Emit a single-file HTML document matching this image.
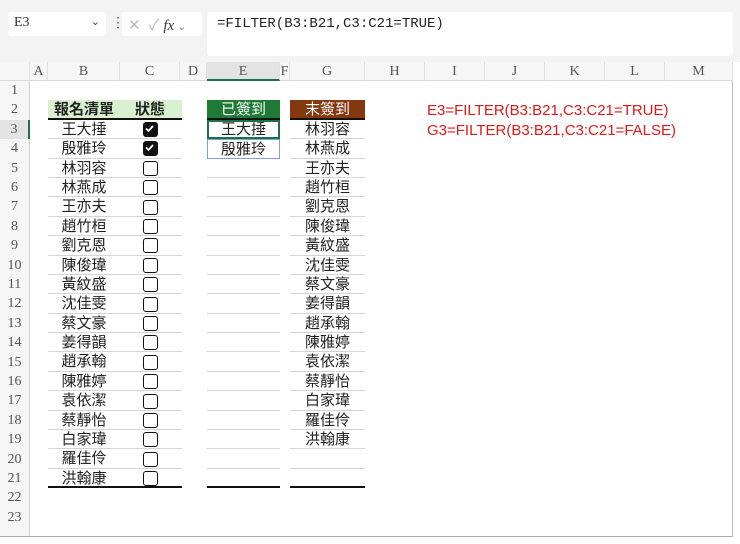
<!DOCTYPE html>
<html><head><meta charset="utf-8"><style>
*{margin:0;padding:0;box-sizing:border-box}
body{width:740px;height:544px;background:#fff;font-family:"Liberation Sans","Noto Sans CJK TC",sans-serif;position:relative;overflow:hidden}
.a{position:absolute}
.top{left:0;top:0;width:740px;height:62px;background:#f3f3f3}
.namebox{left:8px;top:12px;width:98px;height:24px;background:#fff;border-radius:3px;font-family:"Liberation Serif",serif;font-size:14px;color:#333;padding:3px 6px}
.fxbox{left:122px;top:12px;width:80px;height:24px;background:#fff;border-radius:3px;color:#bbb;font-size:15px;padding:2px 6px}
.fbar{left:207px;top:12px;width:526px;height:44px;background:#fff;border-radius:3px;font-family:"Liberation Mono",monospace;font-size:14px;color:#222;padding:4px 10px}
.colh{top:62px;height:19px;background:#f6f6f6;border-bottom:1px solid #d8d8d8;font-family:"Liberation Serif",serif;font-size:14px;color:#555;text-align:center;line-height:19px;border-right:1px solid #e0e0e0}
.rowh{left:0;width:30px;height:19.4px;background:#f6f6f6;font-family:"Liberation Serif",serif;font-size:14px;color:#555;text-align:center;line-height:19.4px;border-right:1px solid #d0d0d0}
.c{height:19.4px;line-height:19.4px;font-size:15px;text-align:center;color:#222}
.ln{border-bottom:1px solid #d4d4d4}
.cb{width:15px;height:15px;border:1.8px solid #111;border-radius:3px;left:143px}
.ck{background:#111}
.red{color:#e01818;font-size:15px;left:427px}
</style></head><body>
<div class="a top"></div>
<div class="a namebox">E3<span style="float:right;font-size:11px;color:#444;font-family:'Liberation Sans'">&#8964;</span></div>
<div class="a" style="left:111px;top:14px;color:#555;font-size:14px">&#8942;</div>
<div class="a fxbox">✕ &nbsp;✓ <i style="color:#333;font-family:'Liberation Serif'">fx</i><span style="font-size:11px;color:#888"> &#8964;</span></div>
<div class="a fbar">=FILTER(B3:B21,C3:C21=TRUE)</div>
<div class="a" style="left:0;top:62px;width:733px;height:475px;border-right:1px solid #bbb;border-bottom:1px solid #aaa"></div>
<div class="a colh" style="left:0;width:30px"></div>
<div class="a colh" style="left:30px;width:18px">A</div>
<div class="a colh" style="left:48px;width:72px">B</div>
<div class="a colh" style="left:120px;width:60px">C</div>
<div class="a colh" style="left:180px;width:27px">D</div>
<div class="a colh" style="left:207px;width:73px;background:#e3e3e3;border-bottom:2px solid #1e7145">E</div>
<div class="a colh" style="left:280px;width:10px">F</div>
<div class="a colh" style="left:290px;width:75px">G</div>
<div class="a colh" style="left:365px;width:60px">H</div>
<div class="a colh" style="left:425px;width:60px">I</div>
<div class="a colh" style="left:485px;width:60px">J</div>
<div class="a colh" style="left:545px;width:60px">K</div>
<div class="a colh" style="left:605px;width:60px">L</div>
<div class="a colh" style="left:665px;width:68px">M</div>
<div class="a rowh" style="top:81px">1</div><div class="a rowh" style="top:100.4px">2</div><div class="a rowh" style="top:119.8px;background:#e3e3e3;border-right:2px solid #1e7145">3</div><div class="a rowh" style="top:139.2px">4</div><div class="a rowh" style="top:158.6px">5</div><div class="a rowh" style="top:178px">6</div><div class="a rowh" style="top:197.4px">7</div><div class="a rowh" style="top:216.8px">8</div><div class="a rowh" style="top:236.2px">9</div><div class="a rowh" style="top:255.6px">10</div><div class="a rowh" style="top:275px">11</div><div class="a rowh" style="top:294.4px">12</div><div class="a rowh" style="top:313.8px">13</div><div class="a rowh" style="top:333.2px">14</div><div class="a rowh" style="top:352.6px">15</div><div class="a rowh" style="top:372px">16</div><div class="a rowh" style="top:391.4px">17</div><div class="a rowh" style="top:410.8px">18</div><div class="a rowh" style="top:430.2px">19</div><div class="a rowh" style="top:449.6px">20</div><div class="a rowh" style="top:469px">21</div><div class="a rowh" style="top:488.4px">22</div><div class="a rowh" style="top:507.8px">23</div><div class="a rowh" style="top:527.2px;height:9px"></div>
<div class="a c" style="left:48px;top:100.4px;width:134px;background:#d9f0d0;font-weight:bold;border-bottom:2px solid #111;height:19.4px"><span style="position:absolute;left:0;width:72px">報名清單</span><span style="position:absolute;left:72px;width:60px">狀態</span></div>
<div class="a c" style="left:207px;top:100.4px;width:73px;background:#1e7a34;color:#fff;border-bottom:2px solid #111">已簽到</div>
<div class="a c" style="left:290px;top:100.4px;width:75px;background:#84380f;color:#fff;border-bottom:2px solid #111">末簽到</div>
<div class="a" style="left:48px;top:119.8px;width:72px">
<div class="c ln" style="width:72px">王大捶</div><div class="c ln" style="width:72px">殷雅玲</div><div class="c ln" style="width:72px">林羽容</div><div class="c ln" style="width:72px">林燕成</div><div class="c ln" style="width:72px">王亦夫</div><div class="c ln" style="width:72px">趙竹桓</div><div class="c ln" style="width:72px">劉克恩</div><div class="c ln" style="width:72px">陳俊瑋</div><div class="c ln" style="width:72px">黃紋盛</div><div class="c ln" style="width:72px">沈佳雯</div><div class="c ln" style="width:72px">蔡文豪</div><div class="c ln" style="width:72px">姜得韻</div><div class="c ln" style="width:72px">趙承翰</div><div class="c ln" style="width:72px">陳雅婷</div><div class="c ln" style="width:72px">袁依潔</div><div class="c ln" style="width:72px">蔡靜怡</div><div class="c ln" style="width:72px">白家瑋</div><div class="c ln" style="width:72px">羅佳伶</div><div class="c" style="width:72px;border-bottom:2.5px solid #111">洪翰康</div>
</div>
<div class="a" style="left:207px;top:119.8px;width:73px">
<div class="c ln" style="width:73px;outline:2px solid #1e7145;outline-offset:-2px">王大捶</div><div class="c ln" style="width:73px;border:1px solid #7fa0d8">殷雅玲</div>
<div class="c ln" style="width:73px"></div><div class="c ln" style="width:73px"></div><div class="c ln" style="width:73px"></div><div class="c ln" style="width:73px"></div><div class="c ln" style="width:73px"></div><div class="c ln" style="width:73px"></div><div class="c ln" style="width:73px"></div><div class="c ln" style="width:73px"></div><div class="c ln" style="width:73px"></div><div class="c ln" style="width:73px"></div><div class="c ln" style="width:73px"></div><div class="c ln" style="width:73px"></div><div class="c ln" style="width:73px"></div><div class="c ln" style="width:73px"></div><div class="c ln" style="width:73px"></div><div class="c ln" style="width:73px"></div><div class="c" style="width:73px;border-bottom:2.5px solid #111"></div>
</div>
<div class="a" style="left:290px;top:119.8px;width:75px">
<div class="c ln" style="width:75px">林羽容</div><div class="c ln" style="width:75px">林燕成</div><div class="c ln" style="width:75px">王亦夫</div><div class="c ln" style="width:75px">趙竹桓</div><div class="c ln" style="width:75px">劉克恩</div><div class="c ln" style="width:75px">陳俊瑋</div><div class="c ln" style="width:75px">黃紋盛</div><div class="c ln" style="width:75px">沈佳雯</div><div class="c ln" style="width:75px">蔡文豪</div><div class="c ln" style="width:75px">姜得韻</div><div class="c ln" style="width:75px">趙承翰</div><div class="c ln" style="width:75px">陳雅婷</div><div class="c ln" style="width:75px">袁依潔</div><div class="c ln" style="width:75px">蔡靜怡</div><div class="c ln" style="width:75px">白家瑋</div><div class="c ln" style="width:75px">羅佳伶</div><div class="c ln" style="width:75px">洪翰康</div><div class="c ln" style="width:75px"></div><div class="c" style="width:75px;border-bottom:2.5px solid #111"></div>
</div>
<div class="a" style="left:120px;top:119.8px;width:62px">
<div class="c ln" style="width:62px"></div><div class="c ln" style="width:62px"></div><div class="c ln" style="width:62px"></div><div class="c ln" style="width:62px"></div><div class="c ln" style="width:62px"></div><div class="c ln" style="width:62px"></div><div class="c ln" style="width:62px"></div><div class="c ln" style="width:62px"></div><div class="c ln" style="width:62px"></div><div class="c ln" style="width:62px"></div><div class="c ln" style="width:62px"></div><div class="c ln" style="width:62px"></div><div class="c ln" style="width:62px"></div><div class="c ln" style="width:62px"></div><div class="c ln" style="width:62px"></div><div class="c ln" style="width:62px"></div><div class="c ln" style="width:62px"></div><div class="c ln" style="width:62px"></div><div class="c" style="width:62px;border-bottom:2.5px solid #111"></div>
</div>
<div class="a cb ck" style="top:122px"><svg width="11" height="11" viewBox="0 0 11 11" style="display:block"><path d="M2 5.5 L4.5 8 L9 3" stroke="#fff" stroke-width="1.8" fill="none"/></svg></div>
<div class="a cb ck" style="top:141.4px"><svg width="11" height="11" viewBox="0 0 11 11" style="display:block"><path d="M2 5.5 L4.5 8 L9 3" stroke="#fff" stroke-width="1.8" fill="none"/></svg></div>
<div class="a cb" style="top:160.8px"></div><div class="a cb" style="top:180.2px"></div><div class="a cb" style="top:199.6px"></div><div class="a cb" style="top:219px"></div><div class="a cb" style="top:238.4px"></div><div class="a cb" style="top:257.8px"></div><div class="a cb" style="top:277.2px"></div><div class="a cb" style="top:296.6px"></div><div class="a cb" style="top:316px"></div><div class="a cb" style="top:335.4px"></div><div class="a cb" style="top:354.8px"></div><div class="a cb" style="top:374.2px"></div><div class="a cb" style="top:393.6px"></div><div class="a cb" style="top:413px"></div><div class="a cb" style="top:432.4px"></div><div class="a cb" style="top:451.8px"></div><div class="a cb" style="top:471.2px"></div>
<div class="a red" style="top:102px">E3=FILTER(B3:B21,C3:C21=TRUE)</div>
<div class="a red" style="top:122px">G3=FILTER(B3:B21,C3:C21=FALSE)</div>
</body></html>
